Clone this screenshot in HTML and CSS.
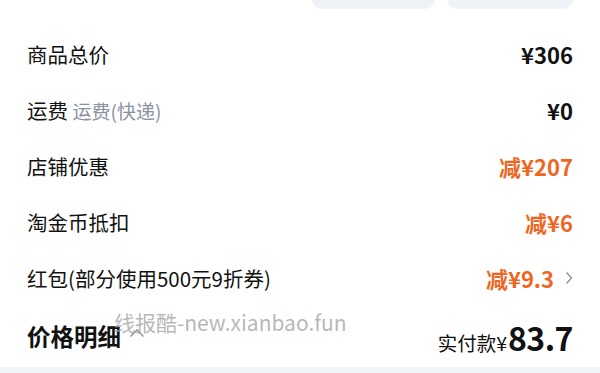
FILE: index.html
```html
<!DOCTYPE html>
<html lang="zh-CN">
<head>
<meta charset="utf-8">
<link rel="stylesheet" href="styles.css">
</head>
<body>
<div class="page">
  <div class="pills">
    <div class="pill pill-a"></div>
    <div class="pill pill-b"></div>
  </div>
  <div class="list">
    <div class="row">
      <div class="label">商品总价</div>
      <div class="value">¥306</div>
    </div>
    <div class="row">
      <div class="label">运费 <span class="sub">运费(快递)</span></div>
      <div class="value">¥0</div>
    </div>
    <div class="row">
      <div class="label">店铺优惠</div>
      <div class="value orange">减¥207</div>
    </div>
    <div class="row">
      <div class="label">淘金币抵扣</div>
      <div class="value orange">减¥6</div>
    </div>
    <div class="row">
      <div class="label">红包(部分使用500元9折券)</div>
      <div class="value orange">减¥9.3<svg class="chev-right" width="8" height="14" viewBox="0 0 8 14"><path d="M1.5 1.5 L6.5 7 L1.5 12.5" fill="none" stroke="#8c8c8c" stroke-width="1.3"/></svg></div>
    </div>
  </div>
  <div class="footer">
    <div class="detail">价格明细<svg class="chev-up" width="16" height="10" viewBox="0 0 16 10"><path d="M1.5 8.5 L8 2 L14.5 8.5" fill="none" stroke="#8c8c8c" stroke-width="1.3"/></svg></div>
    <div class="total"><span class="total-label">实付款¥</span><span class="total-num">83.7</span></div>
    <div class="watermark">线报酷-new.xianbao.fun</div>
  </div>
  <div class="strip"></div>
</div>
</body>
</html>
```
FILE: styles.css
```css
* { box-sizing: border-box; }
html, body { margin: 0; padding: 0; background: #fff; }
body {
  font-family: "Noto Sans CJK SC", "Noto Sans", sans-serif;
  color: #111;
}
.page { width: 600px; height: 373px; overflow: hidden; display: flex; flex-direction: column; }
.pills {
  height: 9px;
  display: flex;
  justify-content: flex-end;
  align-items: flex-end;
  gap: 12px;
  padding-right: 27px;
  overflow: hidden;
}
.pill {
  height: 30px;
  flex: none;
  background: #eff2f6;
  border-radius: 10px;
}
.pill-a { width: 123px; }
.pill-b { width: 126px; }
.list { padding: 17px 27px 0 27px; display: flex; flex-direction: column; }
.row {
  height: 56px;
  display: flex;
  align-items: center;
  justify-content: space-between;
}
.label { font-size: 20.5px; line-height: 1; }
.sub { color: #8991a3; font-size: 19px; }
.value {
  font-size: 22px;
  font-weight: 600;
  line-height: 1;
  display: flex;
  align-items: center;
}
.orange { color: #f1661f; }
.chev-right { margin-left: 11px; }
.footer {
  position: relative;
  height: 61px;
  padding: 0 27px;
  display: flex;
  align-items: center;
  justify-content: space-between;
}
.detail {
  font-size: 23.5px;
  font-weight: 700;
  line-height: 1;
  display: flex;
  align-items: center;
}
.chev-up { margin-left: 8px; margin-top: -8px; }
.total { display: flex; align-items: baseline; line-height: 1; }
.total-label { font-size: 19.5px; }
.total-num { font-size: 32px; font-weight: 600; letter-spacing: -0.5px; margin-left: 1px; }
.watermark {
  position: absolute;
  left: 114px;
  top: 6px;
  font-size: 21px;
  line-height: 1;
  color: rgba(160, 160, 160, 0.75);
  font-family: "Noto Sans CJK SC", "Open Sans", sans-serif;
}
.strip { flex: 1; background: #f0f3f7; }
```
